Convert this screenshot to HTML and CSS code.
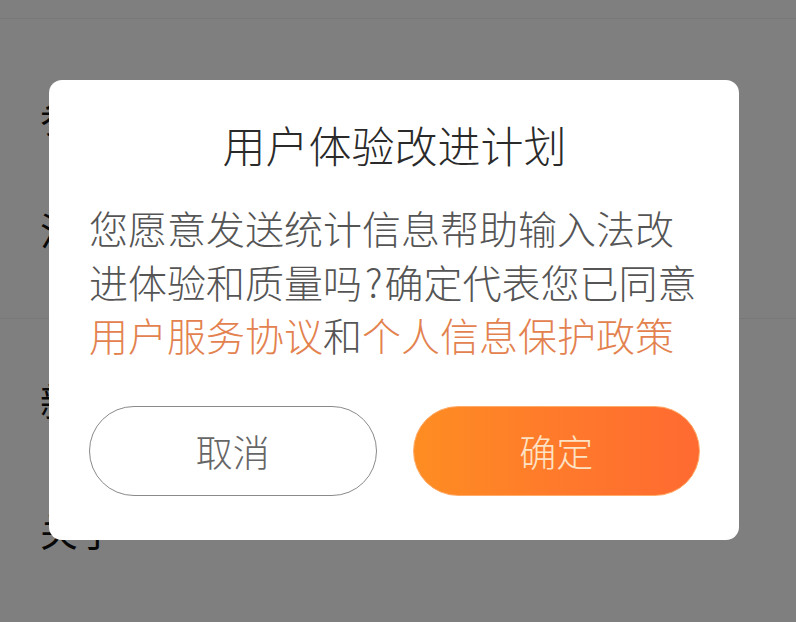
FILE: index.html
```html
<!DOCTYPE html>
<html lang="zh-CN">
<head>
<meta charset="utf-8">
<title>用户体验改进计划</title>
<link rel="stylesheet" href="styles.css">
</head>
<body>
<div class="page">
  <div class="section section-first">
    <div class="row row-a">参与设置</div>
    <div class="row row-a">注</div>
  </div>
  <div class="section section-second">
    <div class="row row-b">新词设置</div>
    <div class="row row-b">关于</div>
  </div>
</div>

<div class="overlay">
  <div class="dialog">
    <h1 class="title">用户体验改进计划</h1>
    <p class="message">您愿意发送统计信息帮助输入法改<br>进体验和质量吗<span class="q">?</span>确定代表您已同意<br><a class="link">用户服务协议</a>和<a class="link">个人信息保护政策</a></p>
    <div class="actions">
      <button class="btn btn-cancel">取消</button>
      <button class="btn btn-ok">确定</button>
    </div>
  </div>
</div>
</body>
</html>
```

FILE: styles.css
```css
* { box-sizing: border-box; }

html, body {
  margin: 0;
  padding: 0;
  width: 796px;
  height: 622px;
  overflow: hidden;
  background: #fefefe;
  font-family: "Noto Sans CJK SC", "Noto Sans", sans-serif;
}

.page {
  padding-top: 18px;
}

.section {
  border-top: 1px solid #f0f0f0;
}

.section-first {
  padding-top: 40px;
  padding-bottom: 33px;
}

.section-second {
  padding-top: 16px;
}

.row {
  padding-left: 40px;
  font-size: 38px;
  color: #111;
  white-space: nowrap;
}

.row-a { height: 113px; line-height: 113px; }
.row-b { height: 130px; line-height: 130px; }

.overlay {
  position: fixed;
  inset: 0;
  background: rgba(0, 0, 0, 0.5);
  display: flex;
  align-items: flex-start;
  padding: 80px 0 0 49px;
}

.dialog {
  width: 690px;
  height: 460px;
  background: #ffffff;
  border-radius: 13px;
  padding: 0 39px 0 40px;
  display: flex;
  flex-direction: column;
}

.title {
  margin: 34px 0 0;
  font-size: 43px;
  font-weight: 300;
  line-height: 60px;
  color: #2a2a2a;
  text-align: center;
}

.message {
  margin: 27px 0 0;
  font-size: 39px;
  font-weight: 300;
  line-height: 53.5px;
  color: #555555;
  white-space: nowrap;
}

.q {
  margin: 0 2px 0 3px;
}

.link {
  color: #e3824f;
  text-decoration: none;
}

.actions {
  margin-top: 44px;
  display: flex;
  gap: 36px;
}

.btn {
  flex: 1;
  height: 90px;
  border-radius: 45px;
  font-family: inherit;
  font-size: 37px;
  font-weight: 300;
  padding: 0;
  cursor: pointer;
}

.btn-cancel {
  background: #ffffff;
  border: 1.5px solid #8a8a8a;
  color: #666666;
}

.btn-ok {
  border: 1px solid #ffac6a;
  background: linear-gradient(90deg, #fe8d22 0%, #ff7a2b 50%, #ff6a31 100%);
  color: #fde2c4;
}
```
